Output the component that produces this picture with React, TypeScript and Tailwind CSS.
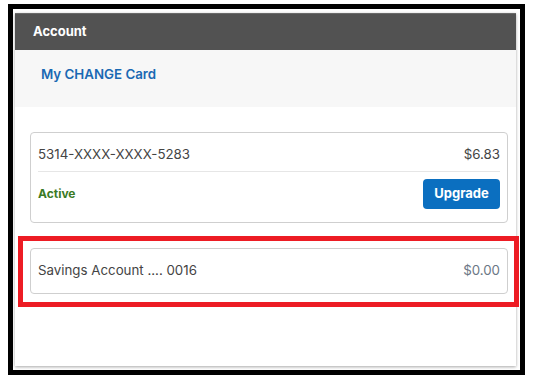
export default function App() {
  return (
    <div className="relative w-[533px] h-[382px] bg-white pt-[4px] pl-[8px] font-['Inter',sans-serif]">
      {/* black screenshot frame */}
      <div className="w-[517px] h-[371px] border-[5px] border-black bg-white pt-[4px] pl-[2px] pr-[4px] pb-[4px]">
        <div className="h-full bg-white shadow-[0_1px_3px_rgba(0,0,0,0.35)] flex flex-col">
          <div className="h-[37px] bg-[#525252] border-t border-[#6a6a6a] flex items-center pl-[18px]">
            <span className="text-white font-bold text-[13px]">Account</span>
          </div>
          <div className="h-[57px] bg-[#f7f7f7] pt-[14px] pl-[26px]">
            <span className="block text-[#1a69b3] font-semibold text-[13.3px] leading-[20px]">My CHANGE Card</span>
          </div>

          <div className="flex flex-col gap-[25px] pt-[25px] ml-[15px] mr-[8px]">
            <div className="border border-[#cfcfcf] rounded-[4px] px-[7px]">
              <div className="flex justify-between items-center pt-[11px] pb-[7px] border-b border-[#e6e6e6] text-[13.3px] leading-[20px] text-[#444]">
                <span>5314-XXXX-XXXX-5283</span>
                <span>$6.83</span>
              </div>
              <div className="flex justify-between items-center pt-[7px] pb-[13px]">
                <span className="text-[12px] font-bold text-[#3b7a25]">Active</span>
                <button className="w-[77px] h-[30px] rounded-[4px] bg-[#0b6fc0] text-white font-bold text-[13px]">
                  Upgrade
                </button>
              </div>
            </div>

            <div className="h-[46px] border border-[#cfcfcf] rounded-[4px] px-[7px] flex justify-between items-center text-[13.3px]">
              <span className="text-[#444]">Savings Account .... 0016</span>
              <span className="text-[#6b7785]">$0.00</span>
            </div>
          </div>
        </div>
      </div>

      {/* red highlight annotation */}
      <div className="absolute left-[18px] top-[236px] w-[501px] h-[71px] border-[5px] border-[#ed1c24]" />
    </div>
  );
}
